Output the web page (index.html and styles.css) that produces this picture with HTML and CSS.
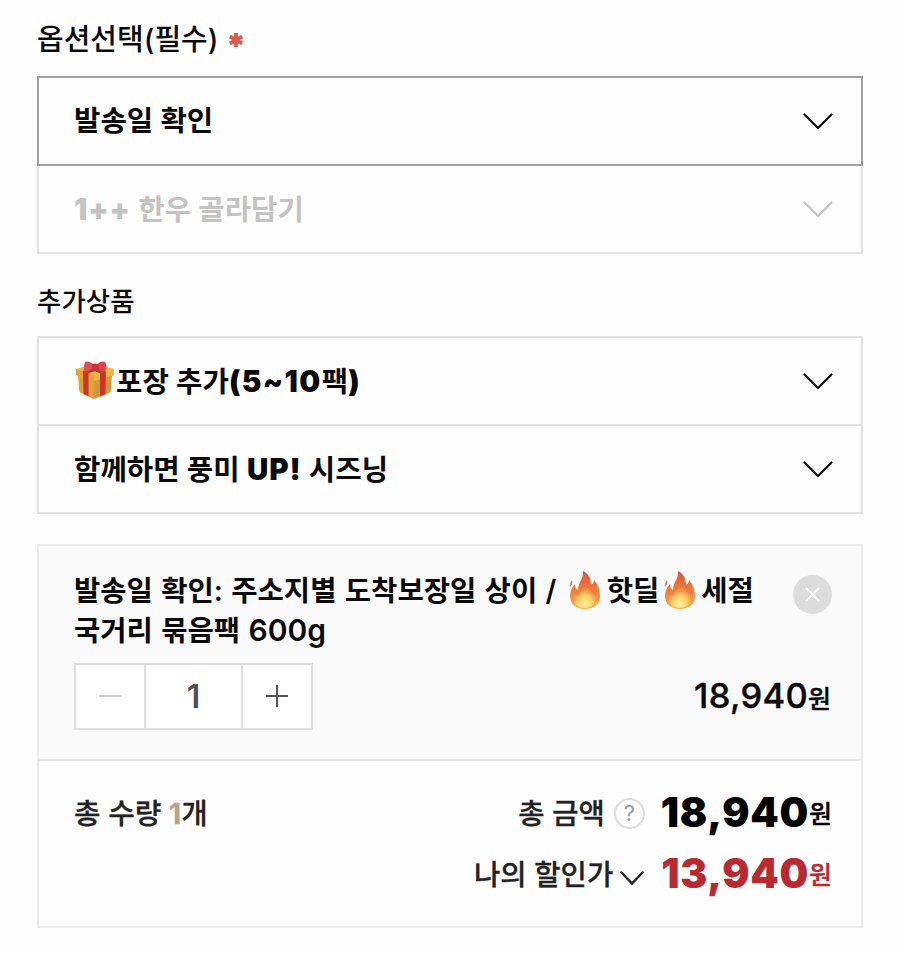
FILE: index.html
```html
<!DOCTYPE html>
<html lang="ko">
<head>
  <meta charset="UTF-8">
  <title>옵션선택</title>
  <link rel="stylesheet" href="styles.css">
</head>
<body>
  <svg width="0" height="0" class="defs">
    <defs>
      <linearGradient id="fireOuter" x1="0" y1="0" x2="0" y2="1">
        <stop offset="0" stop-color="#dc5635"/>
        <stop offset=".55" stop-color="#f0803f"/>
        <stop offset="1" stop-color="#f9b64c"/>
      </linearGradient>
      <radialGradient id="fireInner" cx=".5" cy=".85" r=".75">
        <stop offset="0" stop-color="#fff0a0"/>
        <stop offset=".5" stop-color="#fccb61"/>
        <stop offset="1" stop-color="#f48b3f" stop-opacity="0"/>
      </radialGradient>
      <symbol id="fire" viewBox="0 0 32 38">
        <path d="M14 0C20 3 22 8 22 14C24 13 25 11 25 9C29 14 31 19 31 25C31 33 25 38 16 38C7 38 1 33 1 25C1 20 3 16 6 13C6 16 7 18 9 19C9 11 15 8 14 0Z" fill="url(#fireOuter)"/>
        <path d="M3 9C2 11 0 13 1 16C3 14 4 12 3 9Z" fill="#e08062"/>
        <path d="M16 12C18 17 24 21 26 25C28 32 24 37 16 37C8 37 4 33 5 27C6 23 9 24 10 25C10 20 16 18 16 12Z" fill="url(#fireInner)"/>
      </symbol>
      <symbol id="arrow" viewBox="0 0 30 17">
        <path d="M1.5 1.5L15 15L28.5 1.5" fill="none" stroke="currentColor" stroke-width="2.2" stroke-linecap="round" stroke-linejoin="round"/>
      </symbol>
    </defs>
  </svg>

  <h2 class="title">옵션선택(필수) <svg class="required" viewBox="0 0 14 14"><path d="M7 0V14M.8 3.5L13.2 10.5M13.2 3.5L.8 10.5" stroke="#dc5a50" stroke-width="3.8"/></svg></h2>
  <div class="select active">
    <span class="name">발송일 확인</span>
    <svg class="arrow"><use href="#arrow"/></svg>
  </div>
  <div class="select disabled">
    <span class="name"><b>1++</b> 한우 골라담기</span>
    <svg class="arrow"><use href="#arrow"/></svg>
  </div>

  <h3 class="title sub">추가상품</h3>
  <div class="select">
    <svg class="gift" viewBox="0 0 38 38">
      <path d="M2 12L18 18V38L5 32Q3 31 3 28Z" fill="#dfa038"/>
      <path d="M18 18L36 12L35 29Q35 31 33 32L18 38Z" fill="#d3963a"/>
      <path d="M0 8L19 3L38 8V14L18 20L0 14Z" fill="#efb845"/>
      <path d="M0 8L18 13.500V20L0 14Z" fill="#e4a23b"/>
      <path d="M18 13.500L38 8V14L18 20Z" fill="#edb64b"/>
      <path d="M7 10L12.500 12V35.500L7.500 33ZM24 12L30 10L29.500 33L24 35.500Z" fill="#c93527"/>
      <path d="M7 10L25 5L30 7L12.500 12ZM8 7L13 5L30 10L24 12Z" fill="#bd302d"/>
      <path d="M19 5C15 0 10 0 9 1C8 4 7 9 8 10C11 11 16 9 19 6Z" fill="#dc5054"/>
      <path d="M20 5C23 0 28 0 29 1C31 4 31 9 29 10C25 11 22 9 20 6Z" fill="#d9474d"/>
      <path d="M16 3Q19 2 22 3L23 8Q19 10 16 8Z" fill="#c5333c"/>
    </svg>
    <span class="name pack">포장 추가<b>(5~10</b>팩<b>)</b></span>
    <svg class="arrow"><use href="#arrow"/></svg>
  </div>
  <div class="select last">
    <span class="name">함께하면 풍미 <b>UP!</b> 시즈닝</span>
    <svg class="arrow"><use href="#arrow"/></svg>
  </div>

  <div class="result">
    <div class="item">
      <div class="item-top">
        <p class="item-name">발송일 확인: 주소지별 도착보장일 상이 / <svg class="fire"><use href="#fire"/></svg>핫딜<svg class="fire"><use href="#fire"/></svg>세절<br>국거리 묶음팩 <span class="weight">600g</span></p>
        <button class="remove"><svg viewBox="0 0 39 39"><path d="M13 13L26 26M26 13L13 26" stroke="#fff" stroke-width="2"/></svg></button>
      </div>
      <div class="item-bottom">
        <div class="counter">
          <button class="minus"><svg viewBox="0 0 24 24"><path d="M1 12H23" stroke="#ccc" stroke-width="2"/></svg></button>
          <span class="count">1</span>
          <button class="plus"><svg viewBox="0 0 24 24"><path d="M1 12H23M12 1V23" stroke="#555" stroke-width="2"/></svg></button>
        </div>
        <div class="item-price">18,940<span class="won">원</span></div>
      </div>
    </div>
    <div class="total">
      <div class="total-count">총 수량 <em>1</em>개</div>
      <div class="total-price">
        <div class="line">
          <span class="label">총 금액</span>
          <span class="help">?</span>
          <strong class="price">18,940<span class="won">원</span></strong>
        </div>
        <div class="line sale">
          <span class="label">나의 할인가</span>
          <svg class="small-arrow" viewBox="0 0 24 15"><path d="M1.5 1.5L12 12.5L22.5 1.5" fill="none" stroke="#222" stroke-width="2.5" stroke-linecap="round"/></svg>
          <strong class="price">13,940<span class="won">원</span></strong>
        </div>
      </div>
    </div>
  </div>
</body>
</html>
```
FILE: styles.css
```css
* {
  box-sizing: border-box;
}
body {
  margin: 0;
  padding: 18px 37px 0;
  background: #fefefe;
  color: #0a0a0a;
  font-family: Inter, "Noto Sans CJK KR", sans-serif;
}
.defs {
  display: block;
}
.title {
  margin: 0 0 16px;
  height: 42px;
  line-height: 43px;
  font-size: 29px;
  font-weight: 500;
}
.title.sub {
  margin: 26px 0 14px;
  font-size: 26.5px;
  line-height: 42px;
}
.required {
  width: 14px;
  height: 14px;
  margin-left: 3px;
  vertical-align: 3px;
}
.select {
  display: flex;
  align-items: center;
  height: 88px;
  padding: 0 28px 0 35px;
  border: 2px solid #e2e2e2;
  border-bottom: 0;
}
.select.active {
  height: 90px;
  border: 2px solid #a0a0a0;
}
.select.disabled {
  height: 88px;
  color: #c3c3c3;
  border-top: 0;
  border-bottom: 2px solid #e2e2e2;
}
.select.last {
  height: 90px;
  border-bottom: 2px solid #e2e2e2;
}
.name {
  font-size: 28.7px;
  font-weight: 700;
  line-height: 42px;
  word-spacing: 0.5px;
}
.name b {
  font-size: 29.5px;
  font-weight: 900;
  letter-spacing: 0.9px;
}
.name.pack b {
  letter-spacing: 1.4px;
}
.arrow {
  width: 30px;
  height: 17px;
  margin-left: auto;
}
.gift {
  width: 38px;
  height: 38px;
  margin: 0 2px 2px;
}
.result {
  height: 384px;
  margin-top: 30px;
  border: 2px solid #ebecee;
}
.item {
  height: 215px;
  padding: 25px 30px 0 35px;
  background: #fafafa;
  border-bottom: 2px solid #e8eaec;
}
.item-top {
  display: flex;
  justify-content: space-between;
}
.item-name {
  margin: 0;
  font-size: 28.6px;
  font-weight: 600;
  line-height: 40px;
  word-spacing: 1.1px;
  white-space: nowrap;
}
.weight {
  font-size: 30px;
  line-height: 1;
}
.fire {
  width: 32px;
  height: 38px;
  margin: 0 5.5px 0 4.5px;
  vertical-align: -8px;
}
button {
  padding: 0;
  border: 0;
  background: none;
}
.remove {
  width: 39px;
  height: 39px;
  margin: 4px -1px 0 0;
  border-radius: 50%;
  background: #dcdcdc;
}
.remove svg {
  display: block;
}
.item-bottom {
  display: flex;
  justify-content: space-between;
  align-items: center;
  margin-top: 12px;
}
.counter {
  display: flex;
  width: 239px;
  height: 67px;
  border: 2px solid #dedede;
  background: #fff;
}
.counter button {
  display: flex;
  align-items: center;
  justify-content: center;
  width: 68px;
  padding: 0 1px 1px 0;
}
.counter svg {
  width: 24px;
  height: 24px;
}
.count {
  flex: 1;
  border: solid #dedede;
  border-width: 0 2px;
  color: #505050;
  font-size: 32px;
  font-weight: 600;
  line-height: 63px;
  text-align: center;
}
.item-price {
  margin-top: 2px;
  font-size: 34.5px;
  font-weight: 500;
  line-height: 50px;
  letter-spacing: 0.3px;
  -webkit-text-stroke: 0.4px;
}
.won {
  font-size: 25px;
  font-weight: 500;
  letter-spacing: 0;
}
.total {
  display: flex;
  justify-content: space-between;
  padding: 22px 29px 0 35px;
  color: #222;
}
.total-count {
  font-size: 28.8px;
  font-weight: 500;
  line-height: 62px;
  -webkit-text-stroke: 0.3px;
}
.total-count em {
  color: #b9a18b;
  font-style: normal;
  font-weight: 700;
}
.line {
  display: flex;
  align-items: center;
  justify-content: flex-end;
  height: 61px;
}
.label {
  margin-top: -4px;
  font-size: 28.6px;
  font-weight: 500;
  -webkit-text-stroke: 0.3px;
}
.help {
  width: 31px;
  height: 31px;
  margin: 0 16px 0 9px;
  border: 2px solid #ddd;
  border-radius: 50%;
  color: #999;
  font-size: 22px;
  line-height: 27px;
  text-align: center;
}
.small-arrow {
  width: 24px;
  height: 15px;
  margin: 8px 17px 0 7px;
}
.price {
  margin-top: -2px;
  color: #000;
  font-size: 40.5px;
  font-weight: 900;
  letter-spacing: 0.7px;
}
.price .won {
  font-weight: 500;
  letter-spacing: 0;
  vertical-align: 4px;
  -webkit-text-stroke: 0.4px;
}
.sale .price {
  color: #b92931;
}
```
